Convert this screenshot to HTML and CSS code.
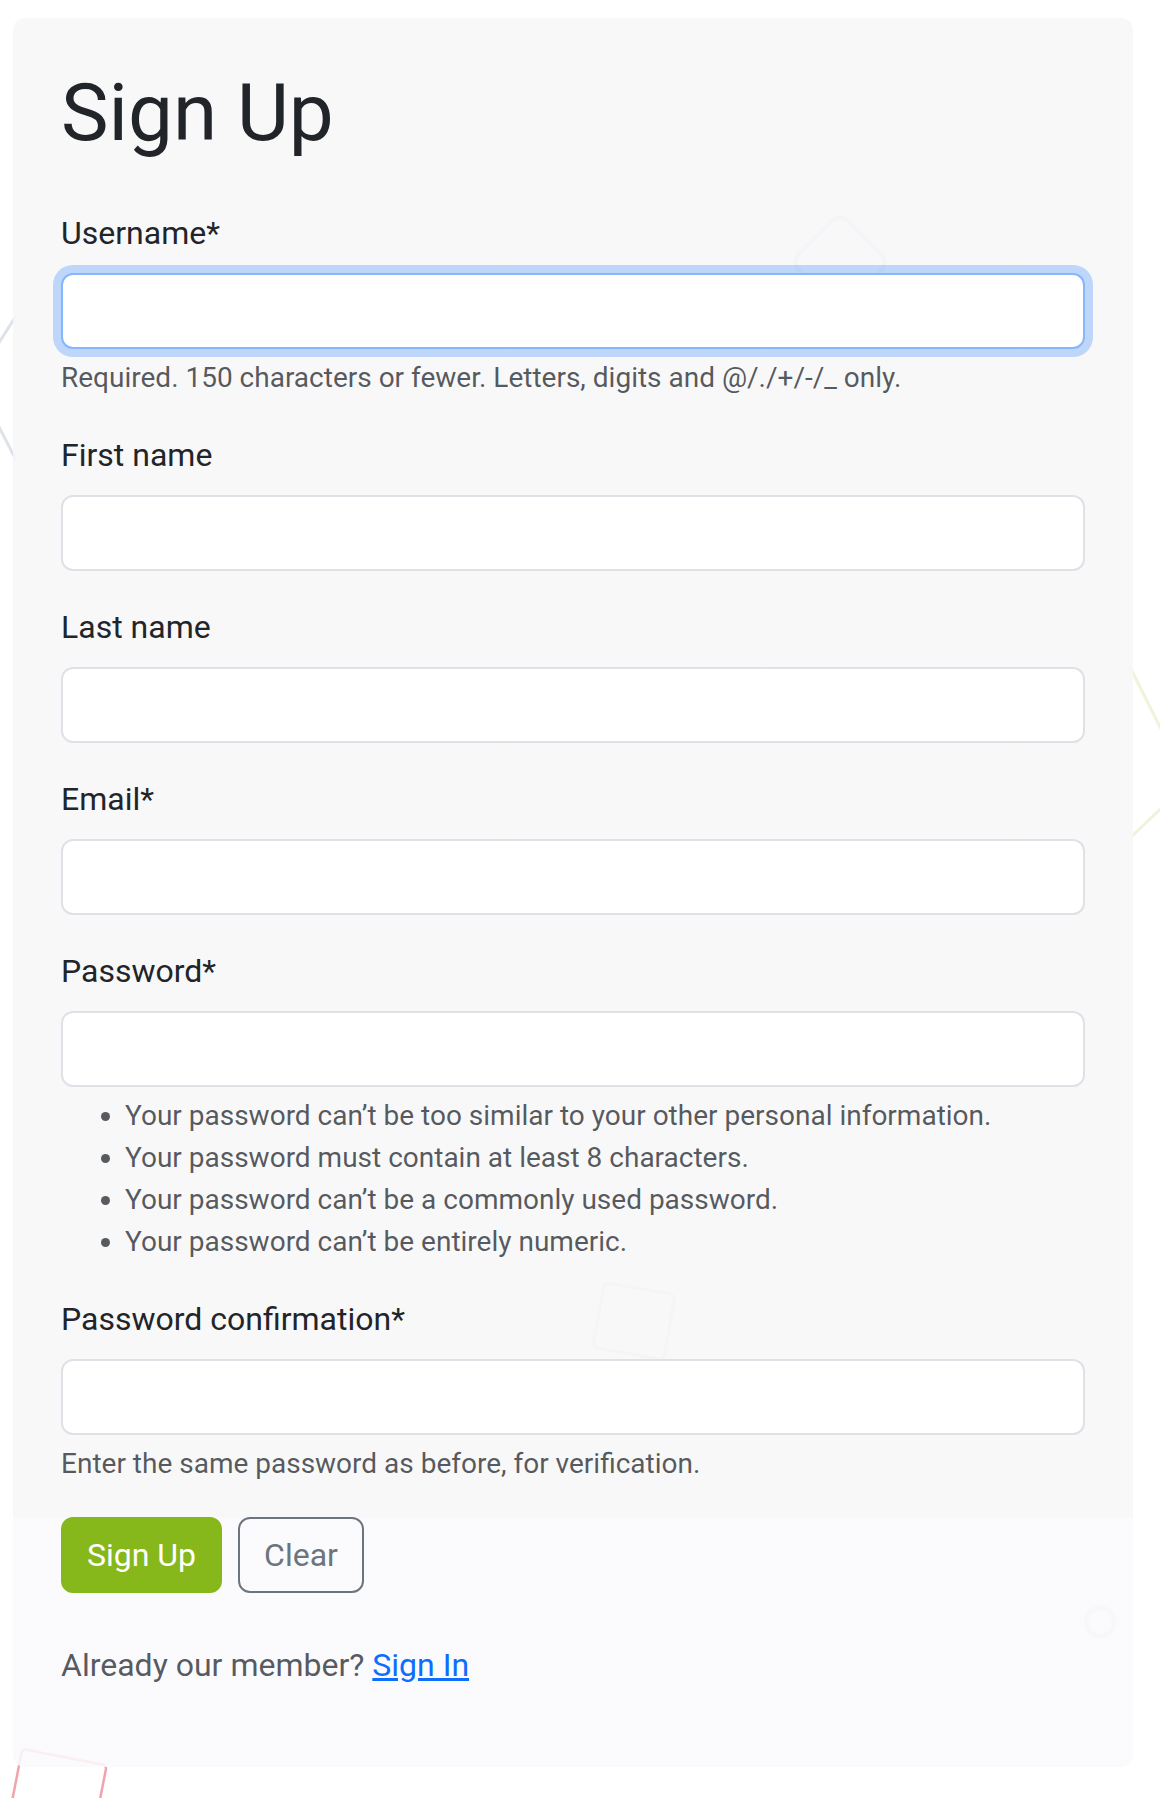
FILE: index.html
```html
<!DOCTYPE html>
<html lang="en">
<head>
<meta charset="utf-8">
<title>Sign Up</title>
<link rel="stylesheet" href="styles.css">
</head>
<body>
<svg class="deco" width="1160" height="1798" viewBox="0 0 1160 1798" aria-hidden="true">
  <path d="M16 316 L-25 380 L16 460" fill="none" stroke="#dde3ea" stroke-width="3" stroke-linejoin="round"/>
  <rect x="805" y="227" width="70" height="70" rx="12" transform="rotate(45 840 262)" fill="none" stroke="#d5e3e6" stroke-width="4"/>
  <path d="M1130 667 L1188 783 L1130 838" fill="none" stroke="#eef3dc" stroke-width="3" stroke-linejoin="round"/>
  <rect x="598" y="1288" width="72" height="66" rx="6" transform="rotate(10 634 1321)" fill="none" stroke="#e3e5ea" stroke-width="3"/>
  <circle cx="1100" cy="1622" r="14" fill="none" stroke="#e6e6ea" stroke-width="5"/>
  <rect x="10" y="1756" width="86" height="120" rx="4" transform="rotate(11 53 1816)" fill="#ffffff" stroke="#f2a2aa" stroke-width="2.5"/>
</svg>
<div class="page">
  <main class="card">
    <h1 class="title">Sign Up</h1>
    <form class="form">
      <div class="field">
        <label class="label" for="username">Username*</label>
        <input class="control is-focused" type="text" id="username">
        <div class="help">Required. 150 characters or fewer. Letters, digits and @/./+/-/_ only.</div>
      </div>
      <div class="field">
        <label class="label" for="first">First name</label>
        <input class="control" type="text" id="first">
      </div>
      <div class="field">
        <label class="label" for="last">Last name</label>
        <input class="control" type="text" id="last">
      </div>
      <div class="field">
        <label class="label" for="email">Email*</label>
        <input class="control" type="email" id="email">
      </div>
      <div class="field">
        <label class="label" for="pw1">Password*</label>
        <input class="control" type="password" id="pw1">
        <div class="help">
          <ul class="rules">
            <li>Your password can’t be too similar to your other personal information.</li>
            <li>Your password must contain at least 8 characters.</li>
            <li>Your password can’t be a commonly used password.</li>
            <li>Your password can’t be entirely numeric.</li>
          </ul>
        </div>
      </div>
      <div class="field">
        <label class="label" for="pw2">Password confirmation*</label>
        <input class="control" type="password" id="pw2">
        <div class="help">Enter the same password as before, for verification.</div>
      </div>
      <div class="actions">
        <button type="submit" class="btn btn-primary">Sign Up</button>
        <button type="reset" class="btn btn-outline">Clear</button>
      </div>
    </form>
    <p class="member">Already our member? <a class="link" href="#">Sign In</a></p>
  </main>
</div>
</body>
</html>
```
FILE: styles.css
```css
* {
  box-sizing: border-box;
}

html,
body {
  margin: 0;
  padding: 0;
}

body {
  position: relative;
  width: 1160px;
  height: 1798px;
  overflow: hidden;
  background: #ffffff;
  font-family: Roboto, "Liberation Sans", Arial, sans-serif;
  font-size: 32px;
  line-height: 1.5;
  color: #212529;
}

.deco {
  position: absolute;
  left: 0;
  top: 0;
  z-index: 0;
  pointer-events: none;
}

.page {
  position: relative;
  z-index: 1;
  padding: 18px 0 0 13px;
}

.card {
  width: 1120px;
  padding: 47px 48px 49px;
  border-radius: 12px;
  background: linear-gradient(to bottom,
    rgba(247, 247, 249, 0.88) 0,
    rgba(247, 247, 249, 0.88) 1500px,
    rgba(250, 250, 253, 0.88) 1500px);
}

.title {
  margin: 0 0 48px;
  font-size: 80px;
  font-weight: 400;
  line-height: 1.2;
  color: #212529;
}

.form {
  margin: 0;
}

.field {
  margin-bottom: 32px;
}

.label {
  display: block;
  margin-bottom: 16px;
  font-size: 32px;
  line-height: 48px;
}

.control {
  display: block;
  width: 100%;
  height: 76px;
  padding: 12px 24px;
  font-family: inherit;
  font-size: 32px;
  line-height: 48px;
  color: #212529;
  background: #ffffff;
  border: 2px solid #dee2e6;
  border-radius: 12px;
  outline: none;
}

.control.is-focused {
  border-color: #86b7fe;
  box-shadow: 0 0 0 8px rgba(13, 110, 253, 0.25);
}

.help {
  margin-top: 8px;
  font-size: 28px;
  line-height: 42px;
  color: rgba(33, 37, 41, 0.75);
}

.rules {
  margin: 0 0 32px;
  padding-left: 64px;
}

.actions {
  display: flex;
  gap: 16px;
}

.btn {
  font-family: inherit;
  font-size: 32px;
  line-height: 48px;
  padding: 12px 24px;
  border: 2px solid transparent;
  border-radius: 12px;
  cursor: pointer;
}

.btn-primary {
  background: #86b71b;
  border-color: #86b71b;
  color: #ffffff;
}

.btn-outline {
  background: transparent;
  border-color: #6c757d;
  color: #6c757d;
}

.member {
  margin: 48px 0 29px;
  color: rgba(33, 37, 41, 0.75);
}

.link {
  color: #0d6efd;
  text-decoration: underline;
}
```
